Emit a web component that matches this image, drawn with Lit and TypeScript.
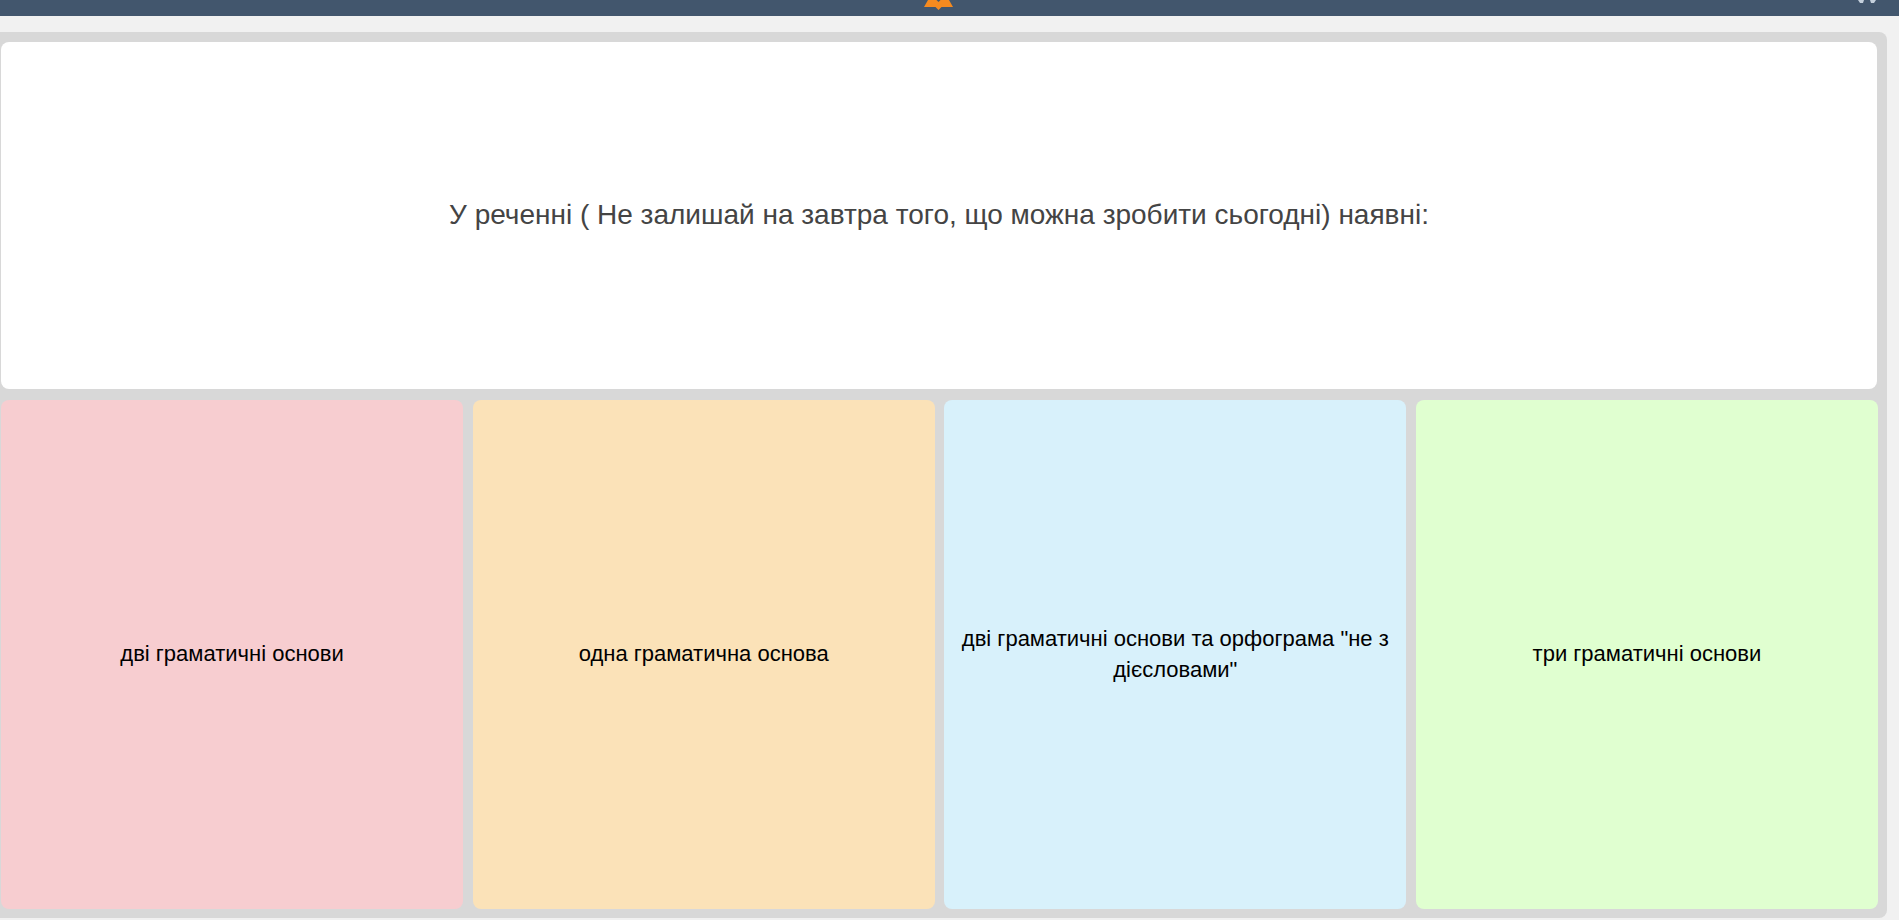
import { LitElement, html, css } from "lit";
import { customElement } from "lit/decorators.js";

const answers = [
  { text: "дві граматичні основи", cls: "pink" },
  { text: "одна граматична основа", cls: "orange" },
  { text: 'дві граматичні основи та орфограма "не з дієсловами"', cls: "blue" },
  { text: "три граматичні основи", cls: "green" },
];

@customElement("app-root")
export class AppRoot extends LitElement {
  static styles = css`
    :host {
      display: block;
      width: 1899px;
      height: 920px;
      overflow: hidden;
      background: #f1f1f1;
      font-family: "Liberation Sans", Arial, sans-serif;
    }
    .top {
      height: 16px;
      background: #42566d;
      display: grid;
      grid-template-columns: 1fr auto 1fr;
      align-items: start;
      overflow: hidden;
    }
    .book { grid-column: 2; display: block; width: 29px; height: 10px; margin-right: 22px; }
    .expand { grid-column: 3; justify-self: end; display: block; width: 20px; height: 4px; margin-right: 22px; }
    .board {
      margin-top: 16px;
      width: 1887px;
      height: 886px;
      box-sizing: border-box;
      background: #d8d8d8;
      border-radius: 0 8px 8px 0;
      padding: 10px 9px 9px 1px;
      display: grid;
      grid-template-rows: 347px 1fr;
      gap: 11px;
    }
    .question {
      background: #fff;
      border-radius: 8px;
      display: flex;
      align-items: center;
      justify-content: center;
      margin-right: 1px;
      padding-bottom: 2px;
      font-size: 28px;
      color: #444;
    }
    .answers {
      display: grid;
      grid-template-columns: repeat(4, 1fr);
      gap: 9.5px;
    }
    .answer {
      border-radius: 8px;
      display: flex;
      align-items: center;
      justify-content: center;
      text-align: center;
      padding: 0 10px 2px;
      font-size: 22px;
      line-height: 31px;
      color: #000;
    }
    .pink { background: #f7cdd0; }
    .orange { background: #fbe2b8; }
    .blue { background: #d8f1fb; }
    .green { background: #e0ffd0; }
  `;

  render() {
    return html`
      <div class="top">
        <svg class="book" viewBox="0 0 29 10" aria-hidden="true">
          <path fill="#f58a1f" d="M4 0h8.500l2 2 2-2h8.500l4 7H17.500l-3 3-3-3H0z" />
        </svg>
        <svg class="expand" viewBox="0 0 20 4" aria-hidden="true">
          <path fill="#c4d0dc" d="M1 0h6l-1 3H3zM13 0h6l-2 3h-3z" />
        </svg>
      </div>
      <div class="board">
        <div class="question">У реченні ( Не залишай на завтра того, що можна зробити сьогодні) наявні:</div>
        <div class="answers">
          ${answers.map((a) => html`<div class="answer ${a.cls}">${a.text}</div>`)}
        </div>
      </div>
    `;
  }
}
